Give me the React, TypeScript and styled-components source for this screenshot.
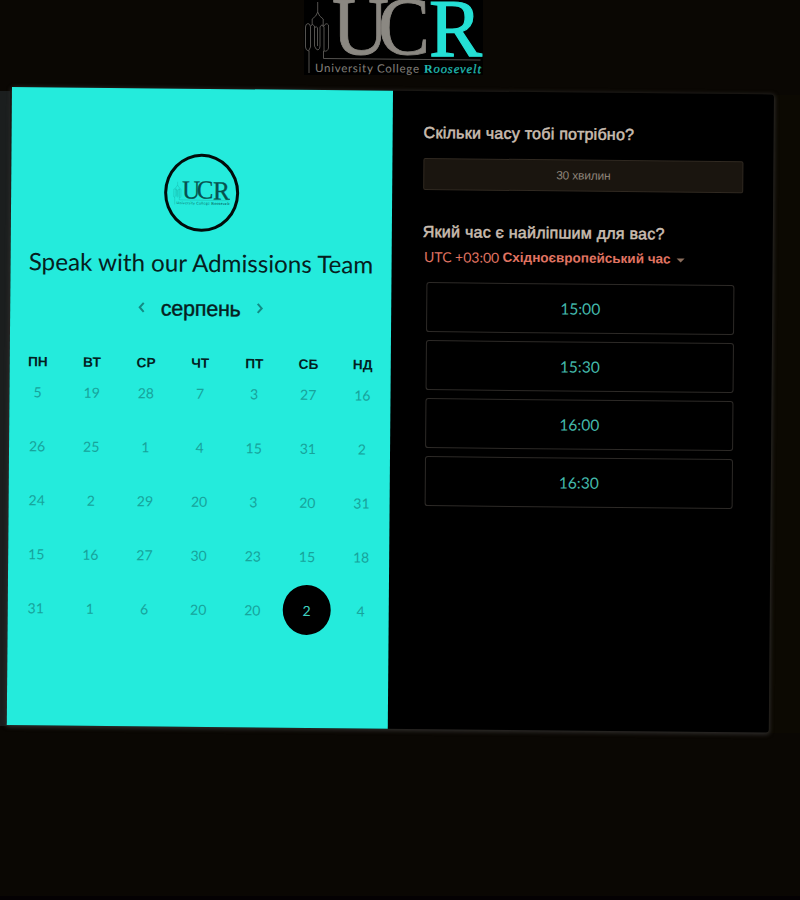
import React from 'react';
import styled, { createGlobalStyle } from 'styled-components';

const GlobalStyle = createGlobalStyle`
  * { box-sizing: border-box; }
  body { margin: 0; background: #0a0703; }
  button { font: inherit; color: inherit; background: none; border: 0; padding: 0; }
`;

const Page = styled.main`
  height: 900px;
  overflow: hidden;
  background: #0a0703;
  border-bottom: 4px solid #040103;
  font-family: 'Liberation Sans', Arial, sans-serif;
`;

const Header = styled.header`
  height: 87px;
  padding-left: 304px;
`;

const LogoPlate = styled.div`
  width: 179px;
  height: 75px;
  background: #000;
`;

const Stage = styled.section`
  height: 648px;
  padding-left: 12px;
  background:
    linear-gradient(#1b1e1e, #1b1e1e) 0 4px / 10px 635px no-repeat,
    linear-gradient(#0c0902, #0c0902) 100% 8px / 40px 638px no-repeat;
`;

const Card = styled.div`
  display: grid;
  grid-template-columns: 381px 381px;
  width: 762px;
  height: 638px;
  border-radius: 3px;
  background: #000;
  box-shadow: 0 1px 4px 1px #302e2c;
  transform: matrix(1, 0.0098, -0.0082, 1, 0, 0);
  transform-origin: 0 0;
`;

const BookingPanel = styled.div`
  display: flex;
  flex-direction: column;
  align-items: center;
  padding-top: 65px;
  background: #24ebdc;
  color: #06201e;
`;

const Avatar = styled.div`
  display: flex;
  align-items: center;
  justify-content: center;
  width: 75px;
  height: 78px;
  border: 3px solid #020b0a;
  border-radius: 50%;
`;

const Title = styled.h1`
  margin: 13px 0 0;
  height: 36px;
  font: 400 24.2px/36px Lato, sans-serif;
  white-space: nowrap;
`;

const MonthBar = styled.div`
  display: flex;
  align-items: center;
  justify-content: center;
  gap: 13px;
  height: 30px;
  margin-top: 13px;
`;

const MonthName = styled.span`
  width: 83px;
  text-align: center;
  font: 400 21.5px/30px 'Liberation Sans', Arial, sans-serif;
  letter-spacing: -0.2px;
  -webkit-text-stroke: 0.4px currentColor;
`;

const Arrow = styled.button`
  display: flex;
  width: 10px;
  height: 14px;
  margin-top: -3px;
  color: #128b84;
`;

const Weekdays = styled.div`
  display: grid;
  grid-template-columns: repeat(7, 54.15px);
  height: 20px;
  margin-top: 30px;
  text-align: center;
  font: 700 13.7px/20px 'Liberation Sans', Arial, sans-serif;
  color: #03211f;
`;

const Days = styled.div`
  display: grid;
  grid-template-columns: repeat(7, 54.15px);
  grid-auto-rows: 54px;
  justify-items: center;
  align-items: center;
  margin-top: -8px;
`;

const Day = styled.button<{ $selected?: boolean }>`
  width: 48px;
  height: 50px;
  border-radius: 50%;
  font: 400 14px/51px Lato, sans-serif;
  text-align: center;
  background: ${(p) => (p.$selected ? '#000' : 'transparent')};
  color: ${(p) => (p.$selected ? '#3fcfbd' : '#17a39b')};
`;

const TimePanel = styled.div`
  padding: 31px 0 0 31px;
  color: #c9bdb0;
`;

const Question = styled.h2`
  margin: 0;
  height: 22px;
  font: 400 16px/22px 'Liberation Sans', Arial, sans-serif;
  letter-spacing: 0.25px;
  -webkit-text-stroke: 0.55px currentColor;
  white-space: nowrap;
`;

const Duration = styled.button`
  display: block;
  width: 320px;
  height: 32px;
  margin: 14px 0 31px;
  border: 1px solid #302921;
  border-radius: 2px;
  background: #1a150f;
  color: #8d8378;
  font: 400 12px/30px 'Liberation Sans', Arial, sans-serif;
  letter-spacing: -0.2px;
`;

const Timezone = styled.button`
  display: flex;
  align-items: center;
  gap: 3px;
  height: 20px;
  margin-top: 4px;
  padding-left: 1px;
  color: #e17462;
  font: 700 13.5px/20px 'Liberation Sans', Arial, sans-serif;
  white-space: nowrap;
`;

const Offset = styled.span`
  width: 76px;
  font: 400 14px/20px Lato, sans-serif;
`;

const Caret = styled.span`
  margin: 2px 0 0 3px;
  border: 4px solid transparent;
  border-top-color: #8c6e5c;
  border-bottom: 0;
`;

const Slots = styled.div`
  display: flex;
  flex-direction: column;
  gap: 8px;
  margin: 15px 0 0 4px;
`;

const Slot = styled.button`
  width: 308px;
  height: 50px;
  border: 1px solid #2d2a27;
  border-radius: 3px;
  color: #43b9ab;
  font: 400 15.6px/47px Lato, sans-serif;
`;

type LogoProps = { width: number; height: number; main: string; accent: string; line: string; caption: string; captionAccent: string };

function Logo({ width, height, main, accent, line, caption, captionAccent }: LogoProps) {
  const serif = "'Liberation Serif', serif";
  return (
    <svg width={width} height={height} viewBox="0 0 179 75" role="img" aria-label="University College Roosevelt" style={{ display: 'block' }}>
      <g fill="none" stroke={line} strokeWidth="0.9">
        <path d="M13.7 2v10M13.7 12l-2 4-3.5 3v6M13.7 12l2 4 3.500 3v8" />
        <path d="M1.500 27q0-3 2.500-3.500Q6.500 24 6.500 27v20l-2 4q-3-1-3-4zM6.500 26q2-3 4 0v20q1.500 4 3.500 4 2-1 2-4V27q2-4 4 0v24M10.500 28q2-3 3 0v18M20 26q2-4 4.500-1v23q-1 4-4.500 3M5 51v22M19.500 51v7.500l157 1.500" />
      </g>
      <g fontFamily={serif} fontSize="82">
        <text x="28" y="54" fill={main} stroke={main} strokeWidth="0.8" textLength="57" lengthAdjust="spacingAndGlyphs">U</text>
        <text x="74" y="54" fill={main} stroke={main} strokeWidth="0.8" textLength="52" lengthAdjust="spacingAndGlyphs">C</text>
        <text x="125" y="56" fill={accent} stroke={accent} strokeWidth="1.2" textLength="53" lengthAdjust="spacingAndGlyphs">R</text>
      </g>
      <g transform="rotate(.4 11 72)">
        <text x="11" y="72" fontFamily="Lato, sans-serif" fontSize="11.500" fill={caption} textLength="104">University College</text>
        <text x="120" y="72" fontFamily={serif} fontWeight="700" fontSize="12" fill={captionAccent}>R</text>
        <text x="129.500" y="72" fontFamily={serif} fontStyle="italic" fontSize="12.5" fill={captionAccent} stroke={captionAccent} strokeWidth="0.3" textLength="47.500">oosevelt</text>
      </g>
    </svg>
  );
}

function Chevron({ d }: { d: string }) {
  return (
    <svg width="10" height="14" viewBox="0 0 10 14" fill="none" stroke="currentColor" strokeWidth="2">
      <path d={d} />
    </svg>
  );
}

const weekdays = ['ПН', 'ВТ', 'СР', 'ЧТ', 'ПТ', 'СБ', 'НД'];
const days = [
  5, 19, 28, 7, 3, 27, 16,
  26, 25, 1, 4, 15, 31, 2,
  24, 2, 29, 20, 3, 20, 31,
  15, 16, 27, 30, 23, 15, 18,
  31, 1, 6, 20, 20, 2, 4,
];
const selectedIndex = 33;
const slots = ['15:00', '15:30', '16:00', '16:30'];

export default function App() {
  return (
    <Page>
      <GlobalStyle />
      <Header>
        <LogoPlate>
          <Logo width={179} height={75} main="#8b8882" accent="#24e0d5" line="#5d5b58" caption="#85817c" captionAccent="#20b9b0" />
        </LogoPlate>
      </Header>
      <Stage>
        <Card>
          <BookingPanel>
            <Avatar>
              <Logo width={57} height={25} main="#07514e" accent="#07514e" line="#129b92" caption="#07635e" captionAccent="#07635e" />
            </Avatar>
            <Title>Speak with our Admissions Team</Title>
            <MonthBar>
              <Arrow aria-label="Попередній місяць"><Chevron d="M7.5 2.5 3.500 7l4 4.500" /></Arrow>
              <MonthName>серпень</MonthName>
              <Arrow aria-label="Наступний місяць"><Chevron d="M2.5 2.5 6.500 7l-4 4.500" /></Arrow>
            </MonthBar>
            <Weekdays>
              {weekdays.map((name) => <span key={name}>{name}</span>)}
            </Weekdays>
            <Days>
              {days.map((day, i) => <Day key={i} $selected={i === selectedIndex}>{day}</Day>)}
            </Days>
          </BookingPanel>
          <TimePanel>
            <Question>Скільки часу тобі потрібно?</Question>
            <Duration>30 хвилин</Duration>
            <Question>Який час є найліпшим для вас?</Question>
            <Timezone>
              <Offset>UTC +03:00</Offset>
              <span>Східноєвропейський час</span>
              <Caret />
            </Timezone>
            <Slots>
              {slots.map((time) => <Slot key={time}>{time}</Slot>)}
            </Slots>
          </TimePanel>
        </Card>
      </Stage>
    </Page>
  );
}
